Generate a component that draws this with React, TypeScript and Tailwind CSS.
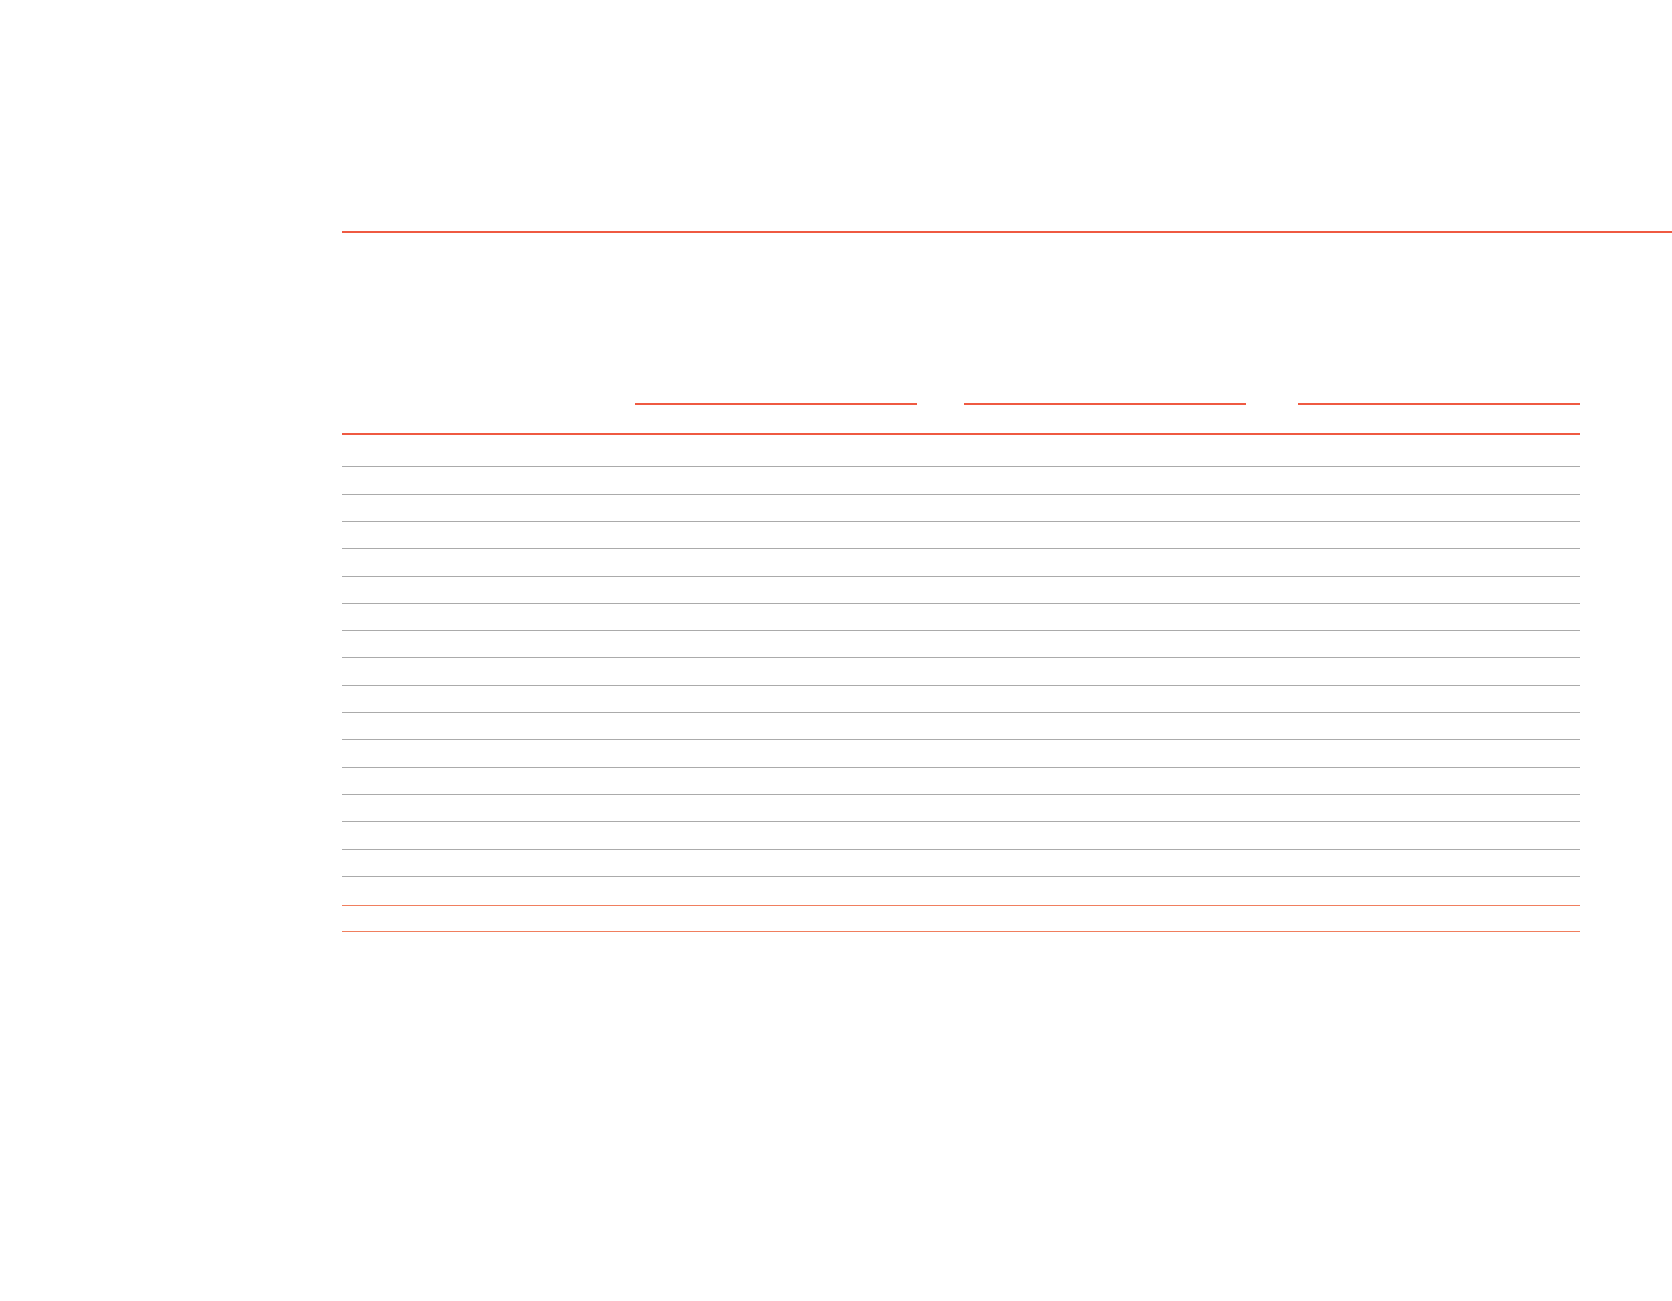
export default function App() {
  const rows = Array.from({ length: 15 });
  return (
    <div className="min-h-[1301px] w-full bg-white pt-[231px] pl-[342px]">
      <div className="h-[2px] bg-[#ef5a42]" />
      <div className="mr-[92px]">
        <div className="mt-[170px] flex">
          <div className="ml-[293px] h-[2px] w-[282px] bg-[#ef5a42]" />
          <div className="ml-[47px] h-[2px] w-[282px] bg-[#ef5a42]" />
          <div className="ml-[52px] h-[2px] w-[282px] bg-[#ef5a42]" />
        </div>
        <div className="mt-[28px] h-[2px] bg-[#ef5a42]" />
        <div className="h-[32.2px] border-b border-[#ababab]" />
        {rows.map((_, i) => (
          <div key={i} className="h-[27.33px] border-b border-[#ababab]" />
        ))}
        <div className="h-[28.6px] border-b border-[#f07f5f]" />
        <div className="h-[26px] border-b border-[#f07f5f]" />
      </div>
    </div>
  );
}
